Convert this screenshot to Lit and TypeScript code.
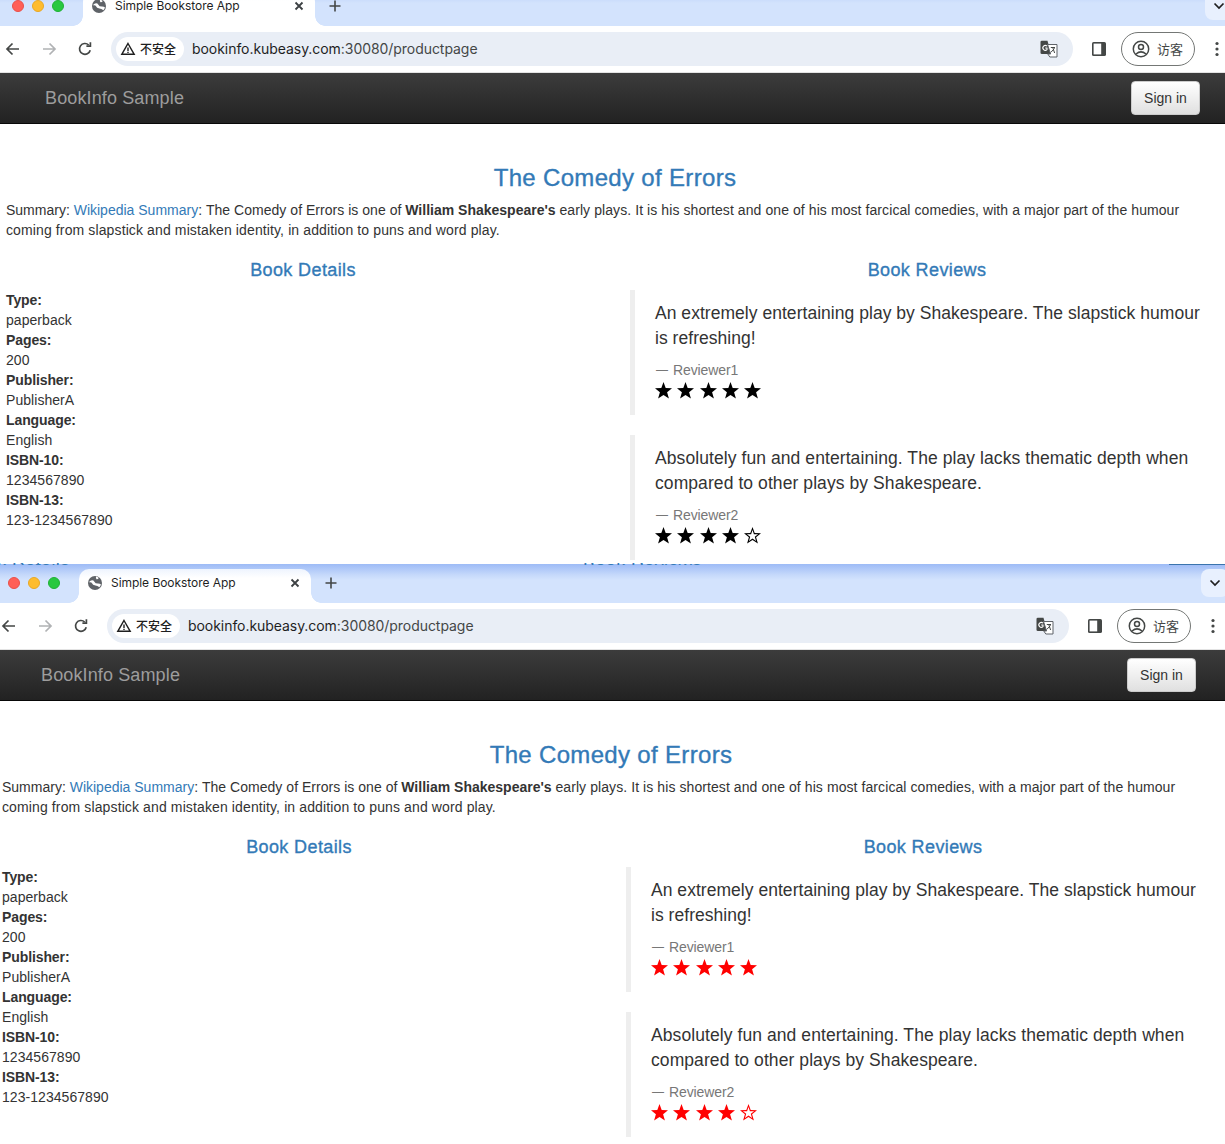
import { LitElement, html, css, svg } from "lit";
import { customElement, property } from "lit/decorators.js";

const STAR = "M8.5 0 L10.7 6 L17 6.2 L12.1 10.2 L13.9 16.6 L8.5 13 L3.1 16.6 L4.9 10.2 L0 6.2 L6.3 6 Z";
const HOLLOW = "M8.5 3 L9.9 7.2 L14.1 7.3 L10.8 9.8 L12 14 L8.5 11.6 L5 14 L6.2 9.8 L2.9 7.3 L7.1 7.2 Z";

@customElement("browser-window")
class BrowserWindow extends LitElement {
  @property() tone = "black";

  static styles = css`
    :host { display: block; width: 1233px; overflow: hidden; background: #fff; font-family: "Liberation Sans", Arial, sans-serif; color: #333; font-size: 14px; line-height: 20px; }
    svg { display: block; }
    .strip { height: 39px; box-sizing: border-box; padding-top: 5px; display: flex; align-items: flex-start; background: linear-gradient(#9dbbf6 0, #c6d9fb 11px, #d3e3fd 16px); position: relative; }
    .lights { display: flex; gap: 8px; padding: 8px 0 0 12px; }
    .light { width: 12px; height: 12px; border-radius: 50%; box-sizing: border-box; }
    .red { background: #ff5f57; border: 1px solid #e9504a; }
    .amber { background: #febc2e; border: 1px solid #e9a825; }
    .green { background: #28c840; border: 1px solid #20b135; }
    .tab { margin-left: 19px; width: 232px; height: 34px; box-sizing: border-box; background: linear-gradient(#eef4fe 0, #fff 9px); border-radius: 10px 10px 0 0; display: flex; align-items: center; padding: 0 8px 6px; gap: 8px; position: relative; font: 12px/16px Inter, "Noto Sans", sans-serif; color: #1f1f1f; }
    .tab::before, .tab::after { content: ""; position: absolute; bottom: 0; width: 10px; height: 10px; }
    .tab::before { left: -10px; background: radial-gradient(circle at 0 0, transparent 9.5px, #fff 10px); }
    .tab::after { right: -10px; background: radial-gradient(circle at 100% 0, transparent 9.5px, #fff 10px); }
    .title { flex: 1; white-space: nowrap; letter-spacing: -0.05px; }
    .plus { margin: 4px 0 0 10px; width: 20px; height: 20px; }
    .chev { margin-left: auto; width: 28px; height: 28px; border-radius: 8px; background: #e8f0fe; display: flex; align-items: center; justify-content: center; }
    .toolbar { height: 46px; box-sizing: border-box; display: flex; align-items: center; padding-right: 3px; background: #fff; }
    .btn { width: 26px; height: 26px; display: flex; align-items: center; justify-content: center; flex: none; }
    .btn + .btn { margin-left: 10px; }
    .omni { flex: 1; margin: 0 13px; height: 34px; border-radius: 17px; background: #e9eef6; display: flex; align-items: center; padding: 0 15px 0 5px; }
    .chip { width: 68px; height: 24px; box-sizing: border-box; border-radius: 12px; background: #fff; display: flex; align-items: center; gap: 4px; padding-left: 4px; font: 500 12px/16px "Noto Sans CJK SC", sans-serif; color: #1f1f1f; }
    .url { flex: 1; margin-left: 8px; font: 14px/20px Inter, "Noto Sans", sans-serif; color: #1f1f1f; letter-spacing: -0.055px; white-space: nowrap; }
    .url span { color: #444746; }
    .profile { width: 74px; height: 34px; box-sizing: border-box; margin-left: 9px; border: 1px solid #747775; border-radius: 17px; display: flex; align-items: center; gap: 7px; padding-left: 10px; font: 13px/16px "Noto Sans CJK SC", sans-serif; color: #444746; flex: none; }
    .dots { margin-left: 9px; }
    .rule { height: 1px; background: #e3e3e3; }
    .nav { height: 51px; box-sizing: border-box; border-bottom: 1px solid #080808; background: linear-gradient(#3c3c3c, #222); display: flex; align-items: center; justify-content: space-between; padding: 0 33px 0 45px; }
    .brand { font-size: 18px; color: #9d9d9d; letter-spacing: 0.13px; }
    .signin { width: 69px; height: 34px; box-sizing: border-box; border: 1px solid #ccc; border-radius: 4px; background: linear-gradient(#fff, #e0e0e0); display: flex; align-items: center; justify-content: center; color: #333; }
    .page { padding: 0 9px 0 6px; }
    h2, h4 { font-weight: 400; color: #337ab7; text-align: center; -webkit-text-stroke: 0.35px #337ab7; }
    h2 { font-size: 24px; line-height: 28px; margin: 40px 0 8px; letter-spacing: 0.33px; }
    h4 { font-size: 18px; line-height: 20px; margin: 20px 0 10px; letter-spacing: 0.38px; }
    p { margin: 0; }
    .summary { padding-right: 10px; }
    .s1 { letter-spacing: 0.03px; }
    .s2 { letter-spacing: 0.08px; }
    .s3 { letter-spacing: 0.12px; }
    a { color: #337ab7; }
    .cols { display: grid; grid-template-columns: 1fr 1fr; gap: 30px; }
    dl { margin: 0; letter-spacing: 0.05px; }
    dt { font-weight: 700; letter-spacing: -0.1px; }
    dd { margin: 0; }
    blockquote { margin: 0 0 20px; padding: 10px 20px; border-left: 5px solid #eee; font-size: 17.5px; line-height: 25px; }
    blockquote p { margin-bottom: 10px; position: relative; top: 1px; }
    .q1 { letter-spacing: 0.035px; }
    .q2 { letter-spacing: 0.08px; }
    .by { font-size: 14px; line-height: 20px; color: #777; display: flex; letter-spacing: -0.1px; }
    .dash { width: 18px; font-size: 12px; padding-left: 1px; box-sizing: border-box; }
    .stars { height: 25px; display: flex; gap: 5.3px; align-items: flex-start; padding-top: 2px; box-sizing: border-box; }
    .black { fill: #000; }
    .red-star { fill: #f00; }
    .hole { fill: #fff; }
  `;

  private stars(n: number) {
    const c = this.tone === "red" ? "red-star" : "black";
    return html`<div class="stars">${[0, 1, 2, 3, 4].map(
      (i) => html`<svg width="17" height="17" viewBox="0 0 17 17" class="${c}"><path d="${STAR}"></path>${i < n ? "" : svg`<path class="hole" d="${HOLLOW}"></path>`}</svg>`
    )}</div>`;
  }

  private quote(text: string, who: string, n: number, cls: string) {
    return html`<blockquote><p class="${cls}">${text}</p><div class="by"><span class="dash">—</span><span>${who}</span></div>${this.stars(n)}</blockquote>`;
  }

  render() {
    return html`
      <div class="strip">
        <div class="lights"><div class="light red"></div><div class="light amber"></div><div class="light green"></div></div>
        <div class="tab">
          <svg width="16" height="16" viewBox="0 0 16 16"><circle cx="8" cy="8" r="7" fill="#5f6368"></circle><path d="M2.6 6.2 Q6 4.4 7.2 6.4 Q8.2 8.6 11 8.6 Q13 8.8 14 9.6 Q13.6 11 12.4 12.2 Q10.4 10.4 8.4 10.4 Q5.6 10.2 5 8.2 Q4.4 7 2.4 7.4 Z M9 1.6 Q10.6 2 11.8 3 Q10.8 4.4 9.6 4.2 Q8.6 3.4 9 1.6 Z" fill="#fff"></path></svg>
          <div class="title">Simple Bookstore App</div>
          <svg width="16" height="16" viewBox="0 0 16 16" stroke="#3c4043" stroke-width="1.8"><path d="M4.5 4.5 L11.5 11.5 M11.5 4.5 L4.5 11.5"></path></svg>
        </div>
        <svg class="plus" viewBox="0 0 20 20" stroke="#444746" stroke-width="1.6"><path d="M10 4.5 V15.5 M4.5 10 H15.5"></path></svg>
        <div class="chev"><svg width="12" height="8" viewBox="0 0 12 8" fill="none" stroke="#1f1f1f" stroke-width="1.7"><path d="M1.5 1.5 L6 6 L10.5 1.5"></path></svg></div>
      </div>
      <div class="toolbar">
        <div class="btn"><svg width="16" height="16" viewBox="0 0 16 16" fill="none" stroke="#444746" stroke-width="1.7"><path d="M14 8 H2.4 M7.5 2.5 L2 8 L7.5 13.5"></path></svg></div>
        <div class="btn"><svg width="16" height="16" viewBox="0 0 16 16" fill="none" stroke="#b0b2b4" stroke-width="1.7"><path d="M2 8 H13.6 M8.5 2.5 L14 8 L8.5 13.5"></path></svg></div>
        <div class="btn"><svg width="16" height="16" viewBox="0 0 16 16" fill="none" stroke="#444746" stroke-width="1.7"><path d="M13.2 9.2 A5.4 5.4 0 1 1 11.7 4"></path><path d="M13.4 1.2 V5.2 H9.4"></path></svg></div>
        <div class="omni">
          <div class="chip">
            <svg width="16" height="16" viewBox="0 0 16 16" fill="none" stroke="#1f1f1f" stroke-width="1.4"><path d="M8 2.5 L14.2 13.3 H1.8 Z"></path><path d="M8 6.5 V10 M8 10.8 V12"></path></svg>
            <span>不安全</span>
          </div>
          <div class="url">bookinfo.kubeasy.com<span>:30080/productpage</span></div>
          <svg width="18" height="18" viewBox="0 0 18 18"><path d="M0.5 2 Q0.5 0.8 1.8 0.8 H7.5 L11 14 H1.8 Q0.5 14 0.5 12.7 Z" fill="#444746"></path><path d="M7.5 4.5 H17 V17 H9.8 L7.8 14 L10.6 14 Z" fill="#fff" stroke="#5f6368"></path><path d="M7 6.2 A2.4 2.4 0 1 0 7 9.6 V8 H5.2" fill="none" stroke="#fff" stroke-width="1.1"></path><path d="M10.8 7.5 H15 M12.6 7 L14.6 13 M14.6 8.4 L10.8 12.4" stroke="#444746" fill="none"></path></svg>
        </div>
        <div class="btn"><svg width="16" height="16" viewBox="0 0 16 16"><rect x="1" y="1" width="14" height="14" rx="1.6" fill="#444746"></rect><rect x="2.6" y="2.6" width="7.6" height="10.8" fill="#fff"></rect></svg></div>
        <div class="profile">
          <svg width="18" height="18" viewBox="0 0 18 18" fill="none" stroke="#444746" stroke-width="1.5"><circle cx="9" cy="9" r="7.7"></circle><circle cx="9" cy="7" r="2.5"></circle><path d="M4 14 Q9 9.8 14 14"></path></svg>
          <span>访客</span>
        </div>
        <div class="btn dots"><svg width="4" height="16" viewBox="0 0 4 16" fill="#444746"><circle cx="2" cy="2.5" r="1.6"></circle><circle cx="2" cy="8" r="1.6"></circle><circle cx="2" cy="13.5" r="1.6"></circle></svg></div>
      </div>
      <div class="rule"></div>
      <div class="nav"><div class="brand">BookInfo Sample</div><div class="signin">Sign in</div></div>
      <div class="page">
        <h2>The Comedy of Errors</h2>
        <p class="summary">Summary: <a>Wikipedia Summary</a>: <span class="s1">The Comedy of Errors is one of</span> <b>William Shakespeare's</b> <span class="s2">early plays. It is his shortest and one of his most farcical comedies, with a major part of the humour</span> <span class="s3">coming from slapstick and mistaken identity, in addition to puns and word play.</span></p>
        <div class="cols">
          <div>
            <h4>Book Details</h4>
            <dl>
              <dt>Type:</dt><dd>paperback</dd>
              <dt>Pages:</dt><dd>200</dd>
              <dt>Publisher:</dt><dd>PublisherA</dd>
              <dt>Language:</dt><dd>English</dd>
              <dt>ISBN-10:</dt><dd>1234567890</dd>
              <dt>ISBN-13:</dt><dd>123-1234567890</dd>
            </dl>
          </div>
          <div>
            <h4>Book Reviews</h4>
            ${this.quote("An extremely entertaining play by Shakespeare. The slapstick humour is refreshing!", "Reviewer1", 5, "q1")}
            ${this.quote("Absolutely fun and entertaining. The play lacks thematic depth when compared to other plays by Shakespeare.", "Reviewer2", 4, "q2")}
          </div>
        </div>
      </div>
    `;
  }
}

@customElement("app-root")
class AppRoot extends LitElement {
  static styles = css`
    :host { display: block; width: 1225px; height: 1144px; overflow: hidden; background: #fff; position: relative; }
    .first { height: 577px; margin-top: -13px; }
    .second { height: 580px; margin-left: -4px; }
    .peek { position: absolute; top: 563px; height: 2px; overflow: hidden; font: 18px/20px "Liberation Sans", Arial, sans-serif; color: #337ab7; white-space: nowrap; }
    .peek span { display: block; margin-top: -5px; letter-spacing: 0.38px; }
    .peek-left { left: -36px; width: 106px; }
    .peek-right { left: 583px; width: 118px; }
    .peek-line { position: absolute; top: 564px; left: 1169px; width: 56px; height: 1px; background: #3b74ad; }
  `;
  render() {
    return html`
      <browser-window class="first" tone="black"></browser-window>
      <browser-window class="second" tone="red"></browser-window>
      <div class="peek peek-left"><span>Book Details</span></div>
      <div class="peek peek-right"><span>Book Reviews</span></div>
      <div class="peek-line"></div>
    `;
  }
}
